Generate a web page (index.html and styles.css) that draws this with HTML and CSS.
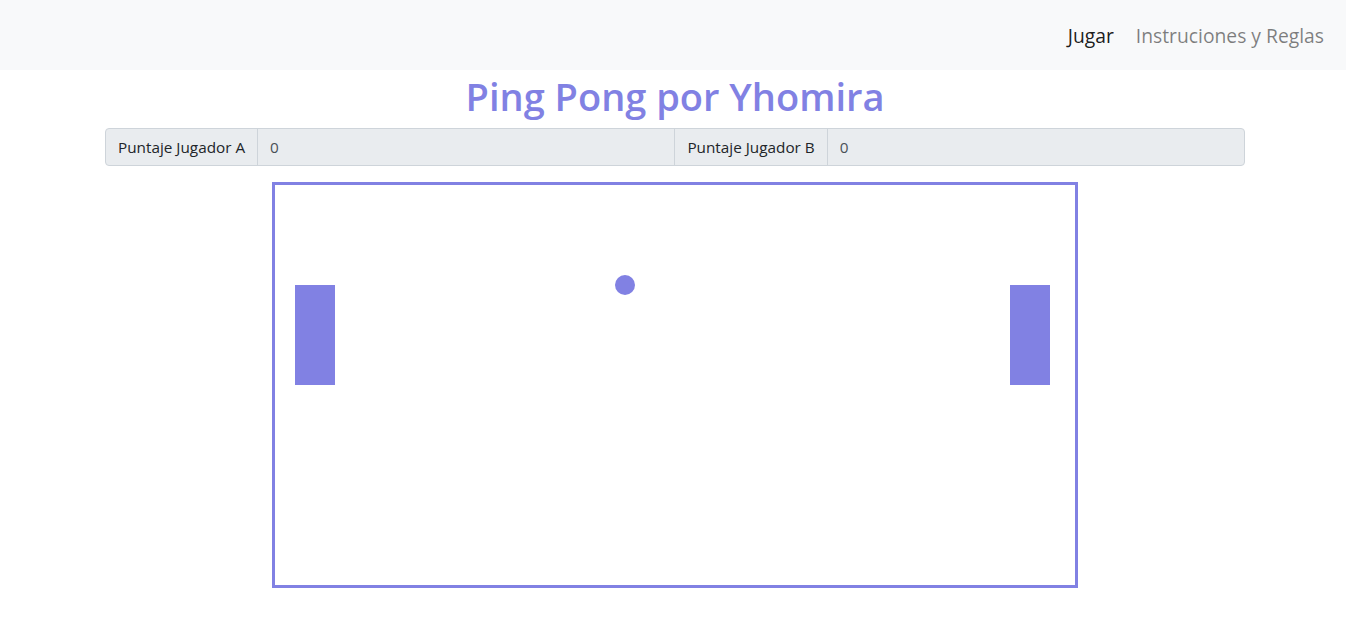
FILE: index.html
```html
<!DOCTYPE html>
<html lang="es">
<head>
    <meta charset="UTF-8">
    <meta name="viewport" content="width=device-width, initial-scale=1.0">
    <title>Ping Pong por Yhomira</title>
    <link rel="stylesheet" href="styles.css">
</head>
<body>
    <nav class="navbar">
        <ul class="nav-links">
            <li><a class="nav-link active" href="#">Jugar</a></li>
            <li><a class="nav-link" href="#">Instruciones y Reglas</a></li>
        </ul>
    </nav>

    <main class="container">
        <h1 class="title">Ping Pong por Yhomira</h1>

        <div class="score-group">
            <span class="score-label">Puntaje Jugador A</span>
            <input class="score-value" type="text" value="0" readonly>
            <span class="score-label">Puntaje Jugador B</span>
            <input class="score-value" type="text" value="0" readonly>
        </div>

        <div class="board">
            <svg class="field" width="800" height="400" viewBox="0 0 800 400">
                <rect x="20" y="100" width="40" height="100" fill="#8181e3"/>
                <rect x="735" y="100" width="40" height="100" fill="#8181e3"/>
                <circle cx="350" cy="100" r="10" fill="#8181e3"/>
            </svg>
        </div>
    </main>
</body>
</html>
```

FILE: styles.css
```css
* {
    margin: 0;
    padding: 0;
    box-sizing: border-box;
}

body {
    font-family: 'Open Sans', 'Noto Sans', sans-serif;
    font-size: 16px;
    color: #212529;
    background: #fff;
}

.navbar {
    background: #f8f9fa;
    height: 70px;
    display: flex;
    justify-content: flex-end;
    align-items: center;
    padding: 0 14px 0 16px;
}

.nav-links {
    list-style: none;
    display: flex;
}

.nav-link {
    display: block;
    padding: 8px;
    margin-left: 6px;
    font-size: 19.3px;
    color: rgba(0, 0, 0, 0.5);
    text-decoration: none;
}

.nav-link.active {
    color: rgba(0, 0, 0, 0.9);
}

.container {
    width: 1140px;
    margin: 0 auto;
    position: relative;
    left: 2px;
}

.title {
    text-align: center;
    font-size: 38px;
    font-weight: 600;
    line-height: 52px;
    color: #8181e3;
    margin-bottom: 6px;
}

.score-group {
    display: flex;
    height: 38px;
    border: 1px solid #ced4da;
    border-radius: 4px;
    background: #e9ecef;
    font-size: 15.3px;
}

.score-label {
    display: flex;
    align-items: center;
    padding: 0 12px;
    white-space: nowrap;
    border-right: 1px solid #ced4da;
}

.score-value {
    flex: 1;
    min-width: 0;
    border: none;
    background: transparent;
    font-family: inherit;
    font-size: 15.3px;
    color: #495057;
    padding: 0 12px;
    outline: none;
}

.score-value:first-of-type {
    border-right: 1px solid #ced4da;
}

.board {
    width: 806px;
    margin: 16px auto 0;
    border: 3px solid #8181e3;
}

.field {
    display: block;
}
```
